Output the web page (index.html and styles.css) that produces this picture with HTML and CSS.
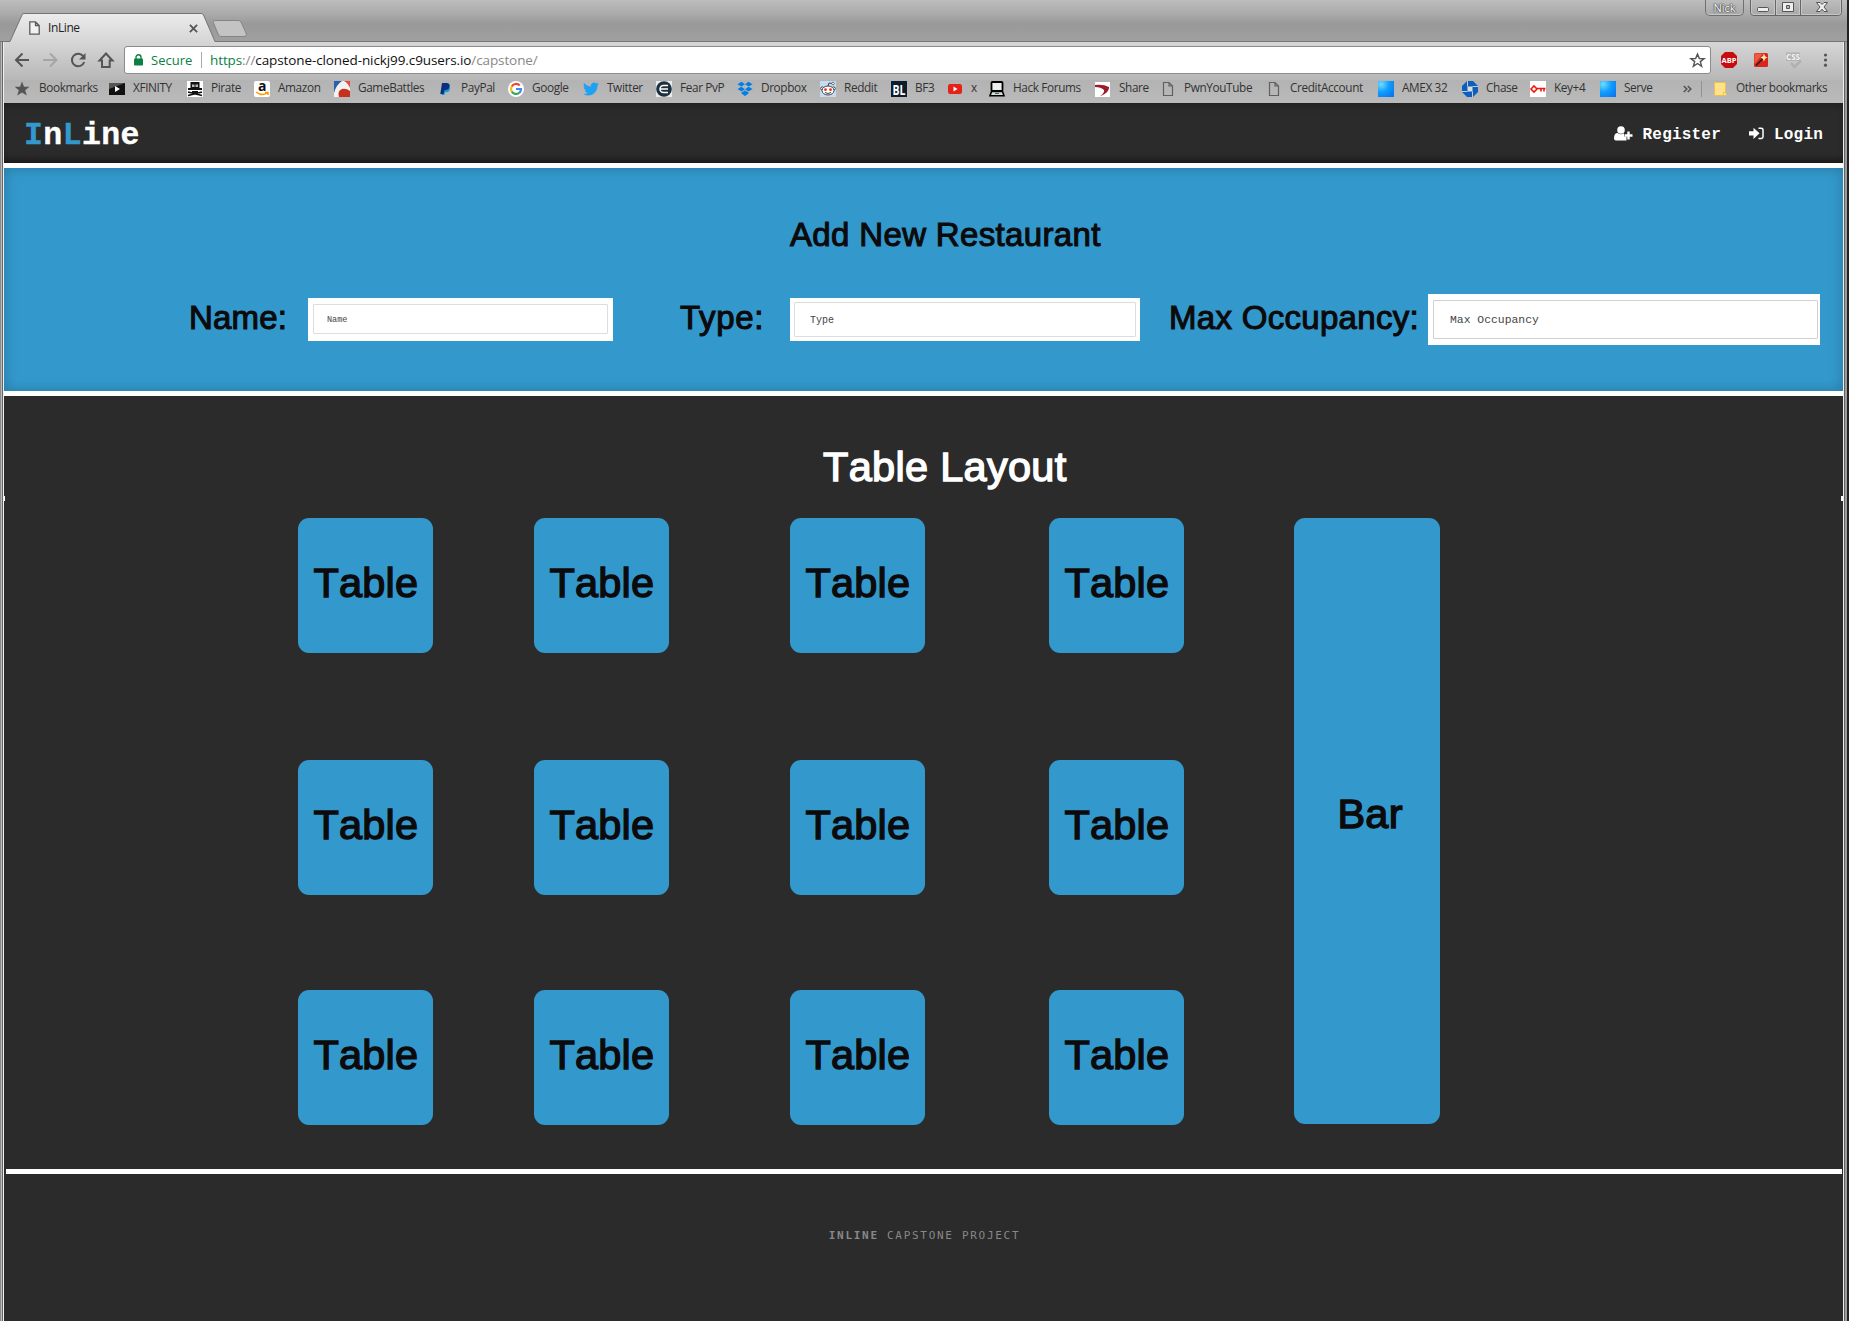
FILE: index.html
```html
<!DOCTYPE html>
<html lang="en">
<head>
<meta charset="utf-8">
<title>InLine</title>
<link rel="stylesheet" href="styles.css">
</head>
<body>
<div class="window">
  <div class="titlebar">
    <div class="tab">
      <svg class="tab-shape" width="240" height="42" viewBox="0 0 240 42"><defs><linearGradient id="tg" x1="0" y1="0" x2="0" y2="1"><stop offset="0" stop-color="#ececec"/><stop offset="1" stop-color="#d6d6d6"/></linearGradient></defs><path d="M0 41.500 H1 L13 15 Q13.500 13.500 15 13.500 H192 Q194 13.500 194.500 15 L206 41.500 V42 H0 Z" fill="url(#tg)"/><path d="M0 41.500 H1 L13 15 Q13.500 13.500 15 13.500 H192 Q194 13.500 194.500 15 L206 41.500" fill="none" stroke="#747474"/><path d="M207 20.500 H229 Q231 20.500 232 22 L237.500 34 Q238 36.500 235 36.500 H213 Q210 36.500 209.500 35 L204.500 23 Q203 20.500 207 20.500Z" fill="#c3c3c3" stroke="#858585"/></svg>
      <svg class="tab-page" width="11" height="14" viewBox="0 0 11 14"><path d="M.8.8H6.500L10.200 4.500V13.200H.8ZM6.500.8V4.500H10.200" fill="#f1f1f1" stroke="#5a5a5a" stroke-width="1.300"/></svg>
      <span class="tab-title">InLine</span>
      <svg class="tab-close" width="9" height="9" viewBox="0 0 10 10"><path d="M1 1 9 9M9 1 1 9" stroke="#555" stroke-width="2"/></svg>
    </div>
    <div class="controls">
      <span class="user">Nick</span>
      <svg width="94" height="17" viewBox="0 0 94 17"><path d="M1.500 0V12Q1.500 15.500 5 15.500H89Q92.500 15.500 92.500 12V0M26.500 0V15M51.500 0V15" fill="none" stroke="#666"/><path d="M2.500 0V12Q2.500 14.500 5 14.500H25.500V0M27.500 0V14.500H50.500V0M52.500 0V14.500H89Q91.500 14.500 91.500 12V0" fill="none" stroke="#c6c6c6"/><rect x="8.500" y="7.500" width="11" height="4" rx="1" fill="#eee" stroke="#555"/><path d="M33.500 2.500H44.500V11.500H33.500ZM37.500 5.500V8.500H40.500V5.500Z" fill="#eee" fill-rule="evenodd" stroke="#555"/><path d="M67.500 2.500H71L73 4.500 75 2.500H78.500L75 7 78.500 11.500H75L73 9.200 71 11.500H67.500L71 7Z" fill="#eee" stroke="#555"/></svg>
    </div>
  </div>
  <div class="client">
    <div class="toolbar">
      <svg class="nav" width="120" height="38" viewBox="0 0 120 38"><g fill="none" stroke="#555" stroke-width="2"><path d="M25 18H13M18.500 11.500 12 18 18.500 24.500"/><path d="M39 18H51M46 11.500 52.500 18 46 24.500" stroke="#a5a5a5"/><path d="M79.500 14.500A6.300 6.300 0 1 0 80.200 20"/><path d="M96.500 18.500H98V25H105.700V18.500H108.500L102 11.500 95.500 18.500Z"/></g><path d="M81.500 11V17.500H75Z" fill="#555"/></svg>
      <div class="omnibox">
        <svg class="lock" width="9" height="12" viewBox="0 0 9 12"><rect y="4.500" width="9" height="7" rx="1" fill="#0b8043"/><path d="M2 5V3.200A2.500 2.500 0 0 1 7 3.200V5" fill="none" stroke="#0b8043" stroke-width="1.400"/></svg>
        <span class="secure">Secure</span>
        <span class="url"><span class="scheme">https</span><span class="dim">://</span>capstone-cloned-nickj99.c9users.io<span class="dim">/capstone/</span></span>
        <svg class="fav" width="15" height="15" viewBox="0 0 16 16"><path d="M8 1.200 10 6H15L11 9.200 12.400 14.200 8 11.200 3.600 14.200 5 9.200 1 6H6Z" fill="none" stroke="#555" stroke-width="1.500"/></svg>
      </div>
      <svg class="ext" width="128" height="38" viewBox="0 0 128 38"><path d="M10 10H18L22 14V22L18 26H10L6 22V14Z" fill="#c70d0f"/><text x="14" y="21" text-anchor="middle" font-size="7.500" font-weight="700" fill="#fff">ABP</text><rect x="39" y="11" width="14" height="14" rx="1.500" fill="#d8261b"/><path d="M39.500 11.500H48L39.500 22Z" fill="#ee5b45"/><path d="M41 23.500 48 16.500" stroke="#222" stroke-width="1.600"/><path d="M49 11.500 50 14.200 52.500 15.500 50 16.800 49 19.500 47.800 16.800 45.500 15.500 47.800 14.200Z" fill="#ffe9a6"/><path d="M71 10.500H85V19H71Z" fill="#b2b2b2"/><path d="M76 21 79.500 25 86 18.500" stroke="#b0b0b0" stroke-width="2.500" fill="none"/><text x="78" y="18" text-anchor="middle" font-size="8" font-weight="700" fill="#f3f3f3">CSS</text><g fill="#555"><circle cx="110.500" cy="13" r="1.600"/><circle cx="110.500" cy="18" r="1.600"/><circle cx="110.500" cy="23.200" r="1.600"/></g></svg>
    </div>
    <div class="bookmarks">
      <div class="bm"><svg viewBox="0 0 16 16"><path d="M7 .5 9 5.700H14.500L10.200 9.200 11.800 14.500 7 11.400 2.200 14.500 3.800 9.200-.3 5.700H5Z" fill="#555"/></svg><span>Bookmarks</span></div>
      <div class="bm"><svg viewBox="0 0 16 16"><path d="M0 2H16V14H0Z" fill="#111"/><path d="M0 2H16L0 8Z" fill="#555"/><path d="M6 5V11L11 8Z" fill="#fff"/></svg><span>XFINITY</span></div>
      <div class="bm"><svg viewBox="0 0 16 16"><path d="M0 0H16V16H0Z" fill="#fff"/><path d="M3.500 1H12.500V7H15V9H1V7H3.500Z" fill="#111"/><path d="M5 3.500H7.500V6H5ZM8.500 3.500H11V6H8.500Z" fill="#bbb"/><path d="M5 10H11V12H5Z" fill="#111"/><path d="M1 11 15 14.500M15 11 1 14.500" stroke="#111" stroke-width="1.600"/></svg><span>Pirate</span></div>
      <div class="bm"><svg viewBox="0 0 16 16"><rect width="16" height="16" rx="2" fill="#fff"/><text x="8" y="10" text-anchor="middle" font-size="14" font-weight="700" fill="#111">a</text><path d="M2 11Q8 15.500 13 12M11 11.500H14V14" fill="none" stroke="#f90" stroke-width="1.500"/></svg><span>Amazon</span></div>
      <div class="bm"><svg viewBox="0 0 16 16"><path d="M0 0H16V16H0Z" fill="#f4f2f0"/><path d="M0 0H8Q2 4 0 12Z" fill="#2860ae"/><path d="M10 0H16V7Q14 2 10 0Z" fill="#e84b3c"/><path d="M5 16Q3 10 8 8Q12 7 16 10V16Z" fill="#c5301f"/></svg><span>GameBattles</span></div>
      <div class="bm"><svg viewBox="0 0 16 16"><path d="M6 5H11Q14 6 12.500 9.500 11 12 8 11L7.500 14H4.500Z" fill="#139ad6"/><path d="M5 2H10Q13.500 2.500 12.500 6 11.500 9.500 7.500 9L6.500 13H3.300Z" fill="#0b2e80"/></svg><span>PayPal</span></div>
      <div class="bm"><svg viewBox="0 0 16 16"><circle cx="8" cy="8" r="8" fill="#fff"/><g fill="none" stroke-width="2.200"><path d="M3.700 5.500A5 5 0 0 1 11.700 4.500" stroke="#ea4335"/><path d="M3.700 5.500A5 5 0 0 0 3.700 10.500" stroke="#fbbc05"/><path d="M3.700 10.500A5 5 0 0 0 11.200 11.800" stroke="#34a853"/><path d="M8 8H13A5 5 0 0 1 11.200 11.800" stroke="#4285f4"/></g></svg><span>Google</span></div>
      <div class="bm"><svg viewBox="0 0 24 24"><path fill="#1da1f2" d="M23.950 4.570a10 10 0 0 1-2.820.77 4.960 4.960 0 0 0 2.160-2.720c-.95.550-2 .96-3.130 1.180a4.920 4.920 0 0 0-8.380 4.480C7.690 8.100 4.070 6.130 1.640 3.160a4.820 4.820 0 0 0-.67 2.480c0 1.710.87 3.210 2.190 4.100a4.900 4.900 0 0 1-2.230-.62v.06a4.920 4.920 0 0 0 3.950 4.830 5 5 0 0 1-2.210.080 4.940 4.940 0 0 0 4.600 3.420A9.870 9.870 0 0 1 0 19.540a14 14 0 0 0 7.550 2.210c9.050 0 14-7.500 14-13.980 0-.21 0-.42-.02-.63a9.940 9.940 0 0 0 2.420-2.570z"/></svg><span>Twitter</span></div>
      <div class="bm"><svg viewBox="0 0 16 16"><path d="M0 0H16V16H0Z" fill="#e8ecee"/><circle cx="8" cy="8" r="7.800" fill="#1d303d"/><path d="M12 4.500H7.500A3.500 3.500 0 0 0 7.500 11.500H12M4.500 8H12" fill="none" stroke="#fff" stroke-width="1.500"/></svg><span>Fear PvP</span></div>
      <div class="bm"><svg viewBox="0 0 16 16"><path d="M4.500.8 8 3.200 4.300 5.600.5 3.200ZM11.500.8 15.500 3.200 11.700 5.600 8 3.200ZM4.300 5.800 8 8.200 4.500 10.500.5 8ZM11.700 5.800 15.500 8 11.500 10.500 8 8.200ZM4.500 11.500 8 9.500 11.500 11.500V12.500L8 15 4.500 12.500Z" fill="#007ee5"/></svg><span>Dropbox</span></div>
      <div class="bm"><svg viewBox="0 0 16 16"><path d="M0 0H16V16H0Z" fill="#c4ddf5"/><circle cx="2.300" cy="7.500" r="1.600" fill="#fff" stroke="#444"/><circle cx="13.700" cy="7.500" r="1.600" fill="#fff" stroke="#444"/><ellipse cx="8" cy="9.500" rx="6" ry="4.500" fill="#fff" stroke="#444"/><path d="M8 5 9 2 12 2.500M5 11.500Q8 13.500 11 11.500" fill="none" stroke="#444"/><circle cx="13" cy="2.500" r="1.300" fill="#fff" stroke="#444" stroke-width=".7"/><circle cx="5.500" cy="8.700" r="1.400" fill="#f0321e"/><circle cx="10.500" cy="8.700" r="1.400" fill="#f0321e"/></svg><span>Reddit</span></div>
      <div class="bm"><svg viewBox="0 0 16 16"><path d="M0 0H16V16H0Z" fill="#0b1c2c"/><text x="1.500" y="13.500" font-size="15" font-weight="700" letter-spacing="0" fill="#fff" textLength="13" lengthAdjust="spacingAndGlyphs">BL</text></svg><span>BF3</span></div>
      <div class="bm"><svg viewBox="0 0 16 16"><rect x="1" y="3" width="14" height="10" rx="2.200" fill="#e62117"/><path d="M6.500 5.500V10.500L10.500 8Z" fill="#fff"/></svg><span>x</span></div>
      <div class="bm"><svg viewBox="0 0 16 16"><rect x="2.500" y="1" width="11" height="9" rx="1" fill="#eee" stroke="#000" stroke-width="1.800"/><path d="M2.500 10.500H13.500L15 14.800H1Z" fill="#ddd" stroke="#000" stroke-width="1.600"/><path d="M6 12.500H10" stroke="#177"/></svg><span>Hack Forums</span></div>
      <div class="bm"><svg viewBox="0 0 16 16"><path d="M0 1H15V16H0Z" fill="#fff"/><path d="M0 4Q8 3 14 6Q15 11 5 15.500Q10 11 9 9Q6 6 0 6Z" fill="#9e1b2b"/></svg><span>Share</span></div>
      <div class="bm"><svg viewBox="0 0 16 16"><path d="M3.500 1.500H9L12.500 5V14.500H3.500ZM9 1.500V5H12.500" fill="none" stroke="#606060" stroke-width="1.200"/></svg><span>PwnYouTube</span></div>
      <div class="bm"><svg viewBox="0 0 16 16"><path d="M3.500 1.500H9L12.500 5V14.500H3.500ZM9 1.500V5H12.500" fill="none" stroke="#606060" stroke-width="1.200"/></svg><span>CreditAccount</span></div>
      <div class="bm"><svg viewBox="0 0 16 16"><defs><radialGradient id="ax" cx=".2" cy=".2" r="1"><stop offset="0" stop-color="#6fdcff"/><stop offset=".5" stop-color="#119dff"/><stop offset="1" stop-color="#0a77ee"/></radialGradient></defs><path d="M0 0H16V16H0Z" fill="url(#ax)"/></svg><span>AMEX 32</span></div>
      <div class="bm"><svg viewBox="0 0 16 16"><path d="M5 0H11L16 5V11L11 16H5L0 11V5Z" fill="#0b5fbe"/><path d="M5.500 5.500H10.500V10.500H5.500Z" fill="#ddd"/><path d="M5.500 0V5.500M16 5.500H10.500M10.500 16V10.500M0 10.500H5.500" stroke="#ccc" stroke-width="1"/></svg><span>Chase</span></div>
      <div class="bm"><svg viewBox="0 0 16 16"><path d="M0 0H16V16H0Z" fill="#fff"/><path d="M1 8 4 5 7 8 4 11ZM7 7.500H15.500M11 8V10.500M14 8V10.500" fill="none" stroke="#f0190f" stroke-width="1.600"/></svg><span>Key+4</span></div>
      <div class="bm"><svg viewBox="0 0 16 16"><path d="M0 0H16V16H0Z" fill="url(#ax)"/></svg><span>Serve</span></div>
      <div class="more"><svg width="9" height="8" viewBox="0 0 9 8"><path d="M.8 1 3.800 4 .8 7M4.800 1 7.800 4 4.800 7" fill="none" stroke="#555" stroke-width="1.600"/></svg></div>
      <div class="bm other"><svg viewBox="0 0 16 16"><path d="M.5 1.500H11.500V14.500H.5Z" fill="#fde28c" stroke="#eebf4e"/><path d="M9.500 14.500V11.500H12V14.500Z" fill="#fff0b5" stroke="#eebf4e"/></svg><span>Other bookmarks</span></div>
    </div>
    <header class="site-header">
      <div class="logo"><b>I</b>n<b>L</b>ine</div>
      <nav class="links">
        <a class="link"><svg width="19" height="15" viewBox="0 0 19 15"><circle cx="7" cy="4" r="3.800" fill="#fff"/><path d="M0 12.500Q0 7 3.500 7 7 9.500 10 7.300V10.500H12.500V14.500H2Q0 14.500 0 12.500Z" fill="#fff"/><path d="M14.500 5.500V13.500M10.500 9.500H18.500" stroke="#fff" stroke-width="2.400"/></svg><span>Register</span></a>
        <a class="link"><svg width="15" height="13" viewBox="0 0 15 13"><path d="M0 4.300H4.500V.8L10.500 6.300 4.500 12V8.500H0Z" fill="#fff"/><path d="M9.500 1.200H12.300Q14 1.200 14 3V9.800Q14 11.500 12.300 11.500H9.500" fill="none" stroke="#fff" stroke-width="1.500"/></svg><span>Login</span></a>
      </nav>
    </header>
    <section class="restaurant">
      <h2 class="heading">Add New Restaurant</h2>
      <div class="form">
        <span class="label">Name:</span><div class="field name"><span>Name</span></div>
        <span class="label label-type">Type:</span><div class="field type"><span>Type</span></div>
        <span class="label label-max">Max Occupancy:</span><div class="field max"><span>Max Occupancy</span></div>
      </div>
    </section>
    <main class="layout">
      <i class="tick left"></i><i class="tick right"></i>
      <h2 class="layout-title">Table Layout</h2>
      <div class="floor">
        <div class="table">Table</div><div class="table">Table</div><div class="table">Table</div><div class="table">Table</div>
        <div class="bar">Bar</div>
        <div class="table">Table</div><div class="table">Table</div><div class="table">Table</div><div class="table">Table</div>
        <div class="table">Table</div><div class="table">Table</div><div class="table">Table</div><div class="table">Table</div>
      </div>
    </main>
    <footer class="footer"><span><b>INLINE</b> CAPSTONE PROJECT</span></footer>
  </div>
</div>
</body>
</html>
```
FILE: styles.css
```css
* { box-sizing: border-box; }
body { margin: 0; overflow: hidden; }

.window {
  width: 1849px;
  height: 1321px;
  background: linear-gradient(to right, #8d8d8d 0 1px, #bababa 1px 2px, #666 2px 3px, #f0f0f0 3px 4px, #2b2b2b 4px 1843px, #ededed 1843px 1844px, #636363 1844px 1845px, #9b9b9b 1845px 1847px, #222 1847px 1849px);
  font-family: "Open Sans", "Noto Sans", sans-serif;
  color: #333;
}
.window svg { flex: none; display: block; overflow: visible; }

/* browser chrome */
.titlebar {
  width: 1847px;
  height: 42px;
  display: flex;
  justify-content: space-between;
  background: linear-gradient(#bdbdbd, #aaa 14px, #999 24px, #a0a0a0 41px);
  box-shadow: inset 0 -1px #747474;
}
.tab {
  position: relative;
  width: 240px;
  margin-left: 9px;
  padding: 14px 0 0 20px;
  display: flex;
  align-items: center;
}
.tab > * { position: relative; }
.tab .tab-shape { position: absolute; left: 0; top: 0; }
.tab-title { margin-left: 8px; width: 141px; font-size: 12px; letter-spacing: -.4px; color: #222; line-height: 28px; }
.controls { display: flex; margin-right: 4px; }
.user {
  width: 39px; height: 16px; margin-right: 5px;
  border: 1px solid #707070; border-top: 0;
  border-radius: 0 0 5px 5px;
  box-shadow: inset 0 -1px #c6c6c6;
  text-align: center; font-size: 11px; line-height: 15px;
  color: #fff; text-shadow: 0 0 1px #333, 0 0 1px #333, 0 0 2px #444;
}
.client { margin: 0 6px 0 4px; height: 1279px; display: flex; flex-direction: column; }
.toolbar {
  height: 38px;
  display: flex;
  background: linear-gradient(#d6d6d6, #b7b7b7);
}
.omnibox {
  width: 1587px; flex: none; height: 28px; margin-top: 4px;
  display: flex; align-items: center;
  padding: 0 5px 0 9px;
  background: #fff;
  border: 1px solid #8b8b8b;
  border-radius: 3px;
  font-size: 13px;
}
.nav { width: 120px; }
.secure { margin-left: 8px; width: 51px; height: 16px; line-height: 16px; border-right: 1px solid #aaa; color: #0b8043; }
.url { margin-left: 8px; flex: 1; color: #111; font-size: 13.500px; letter-spacing: -.1px; }
.scheme { color: #0b8043; }
.dim { color: #888; }
.ext { margin-left: 4px; }
.bookmarks {
  height: 23px;
  padding: 0 0 6px 11px;
  display: grid;
  grid-template-columns: 94px 78px 67px 80px 103px 71px 75px 73px 81px 83px 71px 56px 42px 106px 65px 106px 112px 84px 68px 70px 80px 22px 1fr;
  align-items: center;
  background: linear-gradient(#b3b3b3, #bababa);
  font-size: 11.800px;
  letter-spacing: -.38px;
}
.bm { display: flex; align-items: center; gap: 8px; height: 16px; white-space: nowrap; }
.bm span { line-height: 16px; padding-bottom: 3px; }
.bm svg { width: 16px; height: 16px; }
.more { padding-left: 3px; height: 16px; display: flex; align-items: center; border-right: 1px solid #929292; }
.other { padding-left: 12px; gap: 6px; }

/* site header */
.site-header {
  height: 65px;
  display: flex;
  justify-content: space-between;
  align-items: center;
  padding: 0 20px 0 20px;
  background: #2b2b2b;
  border-bottom: 5px solid #fff;
  box-shadow: inset 0 -7px 8px -5px rgba(0,0,0,.6), inset 0 7px 8px -6px rgba(0,0,0,.35);
  color: #fff;
  font-family: "Liberation Mono", "Courier New", monospace;
  font-weight: 700;
}
.logo { font-size: 31.500px; letter-spacing: .4px; line-height: 54px; padding-top: 6px; -webkit-text-stroke: .4px; }
.logo b { color: #39c; }
.links { display: flex; gap: 28px; font-size: 16px; letter-spacing: .2px; }
.link { display: flex; align-items: center; gap: 10px; }
.link span { padding-top: 3px; }

/* restaurant form */
.restaurant {
  height: 228px;
  background: #39c;
  border-bottom: 5px solid #fff;
  box-shadow: inset 0 0 14px rgba(0,0,0,.22);
  font-family: "Liberation Sans", Arial, sans-serif;
  color: #0d0a0c;
}
.heading { margin: 0; padding: 47px 0 0 786px; font-size: 33px; font-weight: 400; line-height: 40px; letter-spacing: .35px; -webkit-text-stroke: 1.100px; }
.form {
  display: grid;
  grid-template-columns: 119px 305px 177px 350px 288px 392px;
  padding-left: 185px;
  margin-top: 39px;
  height: 51px;
  align-items: center;
}
.label { font-size: 33px; line-height: 40px; white-space: nowrap; -webkit-text-stroke: 1.100px; letter-spacing: .2px; padding-bottom: 3px; }
.label-type { padding-left: 67px; letter-spacing: .7px; }
.label-max { padding-left: 29px; letter-spacing: .3px; }
.field { display: flex; background: #fff; height: 43px; padding: 6px 5px 7px; font-family: "Liberation Mono", monospace; color: #444; }
.field span { flex: 1; border: 1px solid #ddd; border-radius: 1px; display: flex; align-items: center; white-space: pre; }
.name span { font-size: 8.500px; padding: 2px 0 0 13px; }
.type { padding: 4px; }
.type span { font-size: 10px; padding: 2px 0 0 15px; }
.max { height: 51px; padding: 6px 2px 6px 5px; }
.max span { font-size: 11.400px; padding: 0 0 0 16px; border-color: #d0d0d0; }

/* floor plan */
.layout {
  position: relative;
  height: 778px;
  margin: 0 1px 0 2px;
  background: #2b2b2b;
  border-bottom: 5px solid #fff;
  font-family: "Liberation Sans", Arial, sans-serif;
  font-size: 41.500px;
  font-kerning: none;
  -webkit-text-stroke: 1.400px;
}
.tick { position: absolute; top: 100px; width: 2px; height: 5px; background: #fff; }
.tick.left { left: -2px; width: 1px; }
.tick.right { right: -1px; }
.layout-title { margin: 0; padding: 47px 0 0 817px; height: 122px; font-size: inherit; font-weight: 400; line-height: 48px; letter-spacing: .3px; color: #fff; }
.floor {
  display: grid;
  grid-template-columns: 236px 256px 259px 244.500px 146.500px;
  grid-template-rows: 242px 230px 134px;
  padding-left: 292.400px;
  color: #0d0a0c;
}
.table, .bar { background: #39c; border-radius: 11px; display: flex; align-items: center; justify-content: center; }
.table { width: 135px; height: 134.500px; padding-bottom: 5px; letter-spacing: .2px; }
.bar { grid-column: 5; grid-row: 1 / span 3; padding: 0 0 15px 6px; letter-spacing: .3px; }

.footer {
  flex: 1;
  padding: 55px 0 0 2px;
  text-align: center;
  background: #2b2b2b;
  color: #888;
  font: 11px/14px "DejaVu Sans Mono", monospace;
  letter-spacing: 1.700px;
}
```
